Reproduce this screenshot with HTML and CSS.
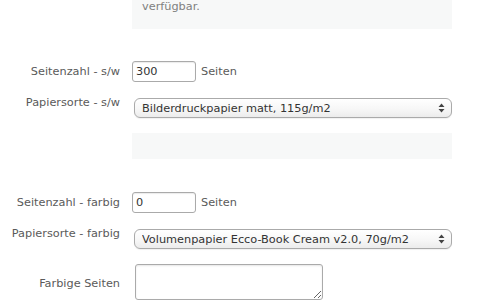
FILE: index.html
```html
<!DOCTYPE html>
<html lang="de">
<head>
  <meta charset="UTF-8" />
  <title>Druckoptionen</title>
  <link rel="stylesheet" href="styles.css">
</head>
<body>
  <div class="form">
    <!-- Hinweis oben -->
    <div class="note note-top">verfügbar.</div>

    <div class="row row-first">
      <label class="label" for="pages-bw">Seitenzahl - s/w</label>
      <input class="num" id="pages-bw" type="text" value="300" />
      <span class="unit">Seiten</span>
    </div>

    <div class="row row-select">
      <label class="label" for="paper-bw">Papiersorte - s/w</label>
      <div class="select-wrap">
        <select id="paper-bw">
          <option>Bilderdruckpapier matt, 115g/m2</option>
        </select>
        <svg class="arrows" width="7" height="10" viewBox="0 0 7 10">
          <path d="M3.5 0.5 L6.5 4 L0.5 4 Z M3.5 9.5 L6.5 6 L0.5 6 Z" fill="#444"/>
        </svg>
      </div>
    </div>

    <div class="note note-empty"></div>

    <div class="row row-first">
      <label class="label" for="pages-c">Seitenzahl - farbig</label>
      <input class="num" id="pages-c" type="text" value="0" />
      <span class="unit">Seiten</span>
    </div>

    <div class="row row-select">
      <label class="label" for="paper-c">Papiersorte - farbig</label>
      <div class="select-wrap">
        <select id="paper-c">
          <option>Volumenpapier Ecco-Book Cream v2.0, 70g/m2</option>
        </select>
        <svg class="arrows" width="7" height="10" viewBox="0 0 7 10">
          <path d="M3.5 0.5 L6.5 4 L0.5 4 Z M3.5 9.5 L6.5 6 L0.5 6 Z" fill="#444"/>
        </svg>
      </div>
    </div>

    <div class="row row-area">
      <label class="label" for="color-pages">Farbige Seiten</label>
      <textarea id="color-pages"></textarea>
    </div>
  </div>
</body>
</html>
```

FILE: styles.css
```css
* {
  margin: 0;
  padding: 0;
  box-sizing: border-box;
}

body {
  width: 500px;
  height: 300px;
  overflow: hidden;
  background: #fff;
  font-family: "DejaVu Sans", Verdana, sans-serif;
  font-size: 11.3px;
  color: #555;
}

.form {
  width: 500px;
}

.note {
  margin-left: 132px;
  width: 320px;
  background: #f7f8f8;
  color: #808080;
}

.note-top {
  height: 29px;
  padding: 0 10px;
  line-height: 13px;
}

.note-empty {
  height: 26px;
  margin-top: 15px;
}

.row {
  display: flex;
  align-items: center;
}

.label {
  width: 120px;
  margin-right: 12px;
  text-align: right;
  line-height: 16px;
  color: #5a5a5a;
}

.row-first {
  margin-top: 32px;
}

.note-empty + .row-first {
  margin-top: 33px;
}

.row-select {
  margin-top: 12px;
  align-items: flex-start;
}

.row-select .label {
  padding-top: 1px;
}

.row-area {
  margin-top: 15px;
}

.row-area .label {
  padding-top: 3px;
}

.num {
  width: 64px;
  height: 21px;
  padding: 0 3px;
  border: 1px solid #aaa;
  border-radius: 3px;
  box-shadow: inset 0 1px 1px rgba(0, 0, 0, 0.08);
  font-family: inherit;
  font-size: 11.3px;
  color: #333;
  outline: none;
}

.unit {
  margin-left: 5px;
  color: #5a5a5a;
}

.select-wrap {
  position: relative;
  margin-top: 4px;
  margin-left: 2px;
}

select {
  display: block;
  width: 318px;
  height: 20px;
  padding: 0 20px 0 7px;
  border: 1px solid #aaa;
  border-radius: 6px;
  background: linear-gradient(#fff, #f6f6f6 60%, #ececec);
  box-shadow: 0 1px 1px rgba(0, 0, 0, 0.06);
  font-family: inherit;
  font-size: 11.3px;
  color: #333;
  -webkit-appearance: none;
  appearance: none;
  outline: none;
}

.arrows {
  position: absolute;
  right: 7px;
  top: 5px;
  pointer-events: none;
}

textarea {
  display: block;
  width: 188px;
  height: 36px;
  margin-left: 3px;
  border: 1px solid #aaa;
  border-radius: 3px;
  box-shadow: inset 0 1px 2px rgba(0, 0, 0, 0.1);
  font-family: inherit;
  font-size: 11.3px;
  outline: none;
}
```
